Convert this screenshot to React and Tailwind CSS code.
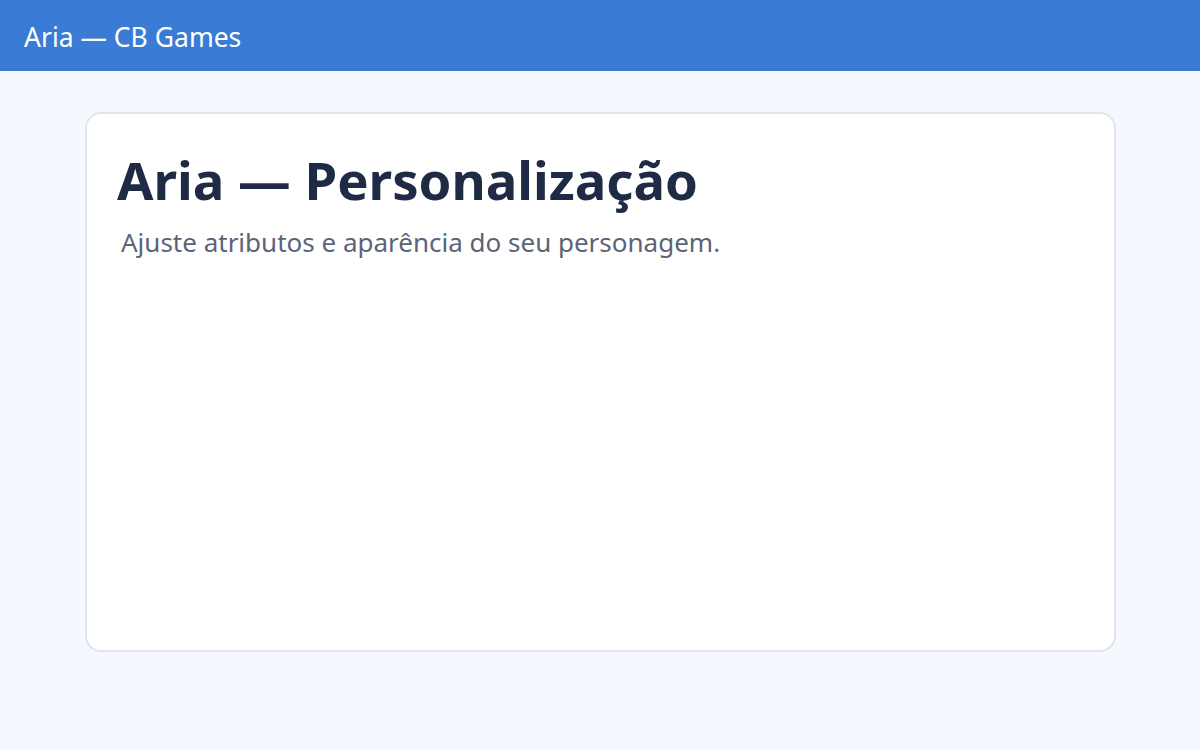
export default function App() {
  return (
    <div
      className="min-h-[750px] bg-[#f5f9ff]"
      style={{ fontFamily: '"Segoe UI", "Noto Sans", sans-serif' }}
    >
      {/* Top bar */}
      <header className="h-[71px] bg-[#3a7bd5] flex items-center px-6 pt-1">
        <span className="text-white text-[26.5px] leading-[1.5]">Aria — CB Games</span>
      </header>

      <main className="pt-[41px] pl-[85px] pr-[84px]">
        <section className="h-[540px] bg-white border-2 border-[#dfe5ee] rounded-2xl px-[30px] pt-[33px]">
          <h1 className="text-[52.7px] font-bold leading-tight text-[#1f2a44]">
            Aria — Personalização
          </h1>
          <p className="mt-[10px] ml-1 text-[26px] leading-[1.5] text-[#5b6478]">
            Ajuste atributos e aparência do seu personagem.
          </p>
        </section>
      </main>
    </div>
  )
}
